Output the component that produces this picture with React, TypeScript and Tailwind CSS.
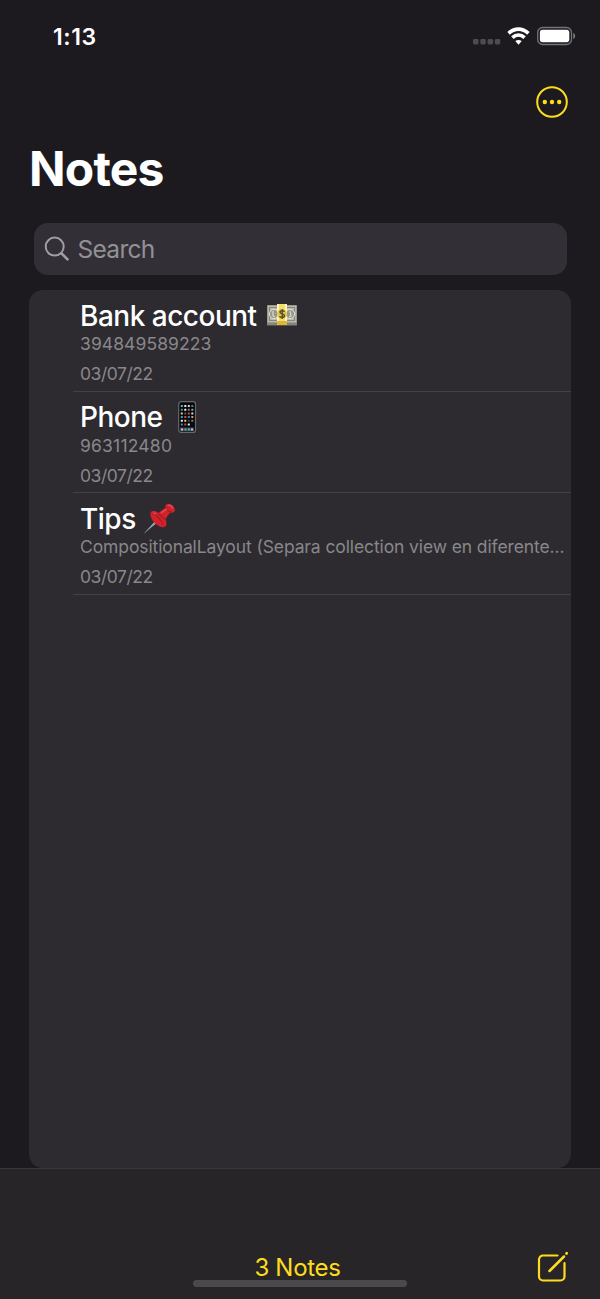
import type { ReactNode } from "react";

function Money() {
  return (
    <svg width="32" height="24" viewBox="0 0 32 24" role="img" aria-label="Money">
      <path d="M1 2h30v20H1z" fill="#77766f" />
      <path d="M1.5 2.5h29v17h-29z" fill="#bdbbad" />
      <path d="M3.5 4.5h25v13h-25z" fill="none" stroke="#85847d" strokeWidth="1.2" />
      <path d="M1 20h30M1 22h30" stroke="#a5a293" strokeWidth=".7" />
      <circle cx="8" cy="11" r="4.6" fill="#99988f" stroke="#e4e1cd" />
      <circle cx="24" cy="11" r="4.6" fill="#99988f" stroke="#e4e1cd" />
      <path d="M7 8v5l2 1M24 8l1 5-2 1" fill="none" stroke="#dedbc8" strokeWidth="1.2" />
      <path d="M11 1h10v21H11z" fill="#f4dc68" />
      <path d="M11 1h2v21h-2zM19 1h2v21h-2z" fill="#fff4be" />
      <path d="M11 18h10v4H11z" fill="#d8b739" />
      <circle cx="16" cy="11" r="5" fill="#e4c546" />
      <path d="M18.5 8.8c-.5-1.2-4.5-1.6-4.500.5 0 2 4.500 1.400 4.500 3.500 0 2.200-4.400 2-4.900.4M16.200 6v10" fill="none" stroke="#58502a" strokeWidth="1.400" />
    </svg>
  );
}

const appColors = [
  "#54b6df", "#eeeeee", "#d7d7d7", "#777777",
  "#349bc6", "#f1f1f1", "#8a7769", "#48b5e8",
  "#e8d57c", "#58585e", "#d9443f", "#dddddd",
  "#389fd4", "#c94e48", "#348bcb", "#f09a35",
  "#f4f4f4", "#e5cf66", "#3c4960", "#4a8fc0",
  "#2f9bdc", "#d9453d", "#eeeeee", "#101013",
];

function Phone() {
  return (
    <svg width="20" height="34" viewBox="0 0 20 34" role="img" aria-label="Mobile phone">
      <rect x="1.7" y="1.7" width="16.8" height="30.8" rx="2.6" fill="#09090c" stroke="#68686c" strokeWidth="1.2" />
      {appColors.map((color, i) => (
        <rect key={i} x={3.8 + (i % 4) * 3.5} y={5 + Math.floor(i / 4) * 3.7} width="2" height="2" rx=".3" fill={color} />
      ))}
      <path d="M3 27.5h14v4H3z" fill="#434a4b" />
      <path d="M4 28.5h2v2H4zM14 28.5h2v2h-2z" fill="#c2cbc5" />
      <path d="M7.5 28.5h2v2h-2zM11 28.5h2v2h-2z" fill="#45acc2" />
    </svg>
  );
}

function Pin() {
  return (
    <svg width="34" height="34" viewBox="0 0 34 34" role="img" aria-label="Pushpin">
      <path d="m1.500 32 12.500-14 2 2z" fill="#b5c3cb" />
      <path d="m1.500 32 13.500-13" stroke="#6b8797" strokeWidth=".8" />
      <path d="M7.500 12c.6-2.500 4.500-2.500 8-.2l7-5.300c-.6-3 1.800-4.800 5-3.200 4 2 5.800 6.200 3.200 8-1 .7-2.600.5-3.700.2l-4.500 6.500c1.600 4 1.200 7.300-1.200 8-3 .8-6.700-1.200-9.400-3.800C9 19.200 6.800 15 7.500 12Z" fill="#d2222b" />
      <path d="M9 13c3-1 10 6 11 11M15.500 12.500l6.500 6M23 6c0 2 3 5 6 5" fill="none" stroke="#a91b24" strokeWidth="1.300" />
      <path d="m18 12 6-4M25 4.500c2-1 4 1 5 3M10 12l3 1" fill="none" stroke="#f04b50" strokeWidth="1.300" />
    </svg>
  );
}

type Note = { title: string; body: string; icon: ReactNode; titleClass: string; bodyClass: string };

const notes: Note[] = [
  { title: "Bank account", body: "394849589223", icon: <Money />, titleClass: "w-[186px]", bodyClass: "tracking-[0.08px]" },
  { title: "Phone", body: "963112480", icon: <Phone />, titleClass: "w-[97px]", bodyClass: "tracking-[0.2px]" },
  { title: "Tips", body: "CompositionalLayout (Separa collection view en diferente...", icon: <Pin />, titleClass: "w-[63px]", bodyClass: "tracking-[-0.11px]" },
];

export default function App() {
  return (
    <div className="flex h-[1299px] w-[600px] flex-col overflow-hidden bg-[#1c1a1f] font-['Inter',sans-serif] text-white">
      <header className="flex h-[72px] items-center justify-between pr-6 pl-[53px]">
        <span className="pt-[1px] text-[23px] leading-7 font-semibold tracking-[0.6px]">1:13</span>
        <div className="flex items-center">
          <svg width="28" height="8" viewBox="0 0 28 8" className="mt-[11px] fill-[#4c4b4f]">
            <rect x="0" y="1" width="5.500" height="5.500" rx="1.4" />
            <rect x="7.300" y="1" width="5.500" height="5.500" rx="1.4" />
            <rect x="14.600" y="1" width="5.500" height="5.500" rx="1.4" />
            <rect x="21.800" y="1" width="5.500" height="5.500" rx="1.4" />
          </svg>
          <svg width="24" height="18" viewBox="0 0 24 18" className="ml-[6px]" fill="none" stroke="white" strokeWidth="3.700">
            <path d="M1.600 6.300C7.600.6 15.400.6 21.400 6.300" />
            <path d="M5.400 10.600c3.600-3.300 8.600-3.300 12.200 0" />
            <path d="M8.300 14.100c1.800-1.600 4.600-1.600 6.400 0L11.500 17.700Z" fill="white" stroke="none" />
          </svg>
          <svg width="39" height="20" viewBox="0 0 39 20" className="ml-[6px]">
            <rect x=".7" y="1.500" width="33.800" height="17" rx="5" fill="none" stroke="#737276" strokeWidth="1.300" />
            <rect x="2.900" y="3.800" width="29.400" height="12.400" rx="2.600" fill="white" />
            <path d="M36.300 7c2.400 1 2.400 5 0 6Z" fill="#817f83" />
          </svg>
        </div>
      </header>

      <div className="flex h-[60px] items-center justify-end pr-[31px]">
        <button aria-label="More options">
          <svg width="34" height="34" viewBox="0 0 34 34" className="block">
            <circle cx="17" cy="17" r="14.800" fill="none" stroke="#ffdc1b" strokeWidth="2" />
            <g fill="#ffdc1b"><circle cx="9.800" cy="17" r="2.200" /><circle cx="17" cy="17" r="2.200" /><circle cx="24.200" cy="17" r="2.200" /></g>
          </svg>
        </button>
      </div>

      <h1 className="h-[91px] pt-[7px] pl-[29px] text-[48px] leading-[60px] font-bold tracking-[-0.8px]">Notes</h1>

      <div className="mr-[33px] ml-[33.5px] flex h-[52px] shrink-0 items-center rounded-[14px] bg-[#323036] pl-[10px] text-[#929095]">
        <svg width="28" height="28" viewBox="0 0 28 28" fill="none" stroke="#a09ea2" strokeLinecap="round">
          <circle cx="10.700" cy="11.600" r="9" strokeWidth="2" />
          <path d="m17.500 18.400 6 6" strokeWidth="2.700" />
        </svg>
        <span className="ml-[6px] text-[24.5px] leading-8 tracking-[-0.7px]">Search</span>
      </div>

      <main className="mx-[29px] mt-[15px] h-[878px] shrink-0 overflow-hidden rounded-[14px] bg-[#2d2b2f]">
        {notes.map((note) => (
          <article key={note.title} className="ml-[44px] flex h-[101.500px] flex-col border-b border-[#434145] pl-[7px]">
            <div className="mt-[8px] flex h-[34px] items-center">
              <h2 className={`shrink-0 pt-[1px] text-[28px] leading-[34px] font-medium tracking-[-0.5px] whitespace-nowrap ${note.titleClass}`}>{note.title}</h2>
              {note.icon}
            </div>
            <p className={`text-[17.500px] leading-6 whitespace-nowrap text-[#89878b] ${note.bodyClass}`}>{note.body}</p>
            <time className="mt-[6px] text-[17.500px] leading-6 tracking-[-0.45px] text-[#89878b]">03/07/22</time>
          </article>
        ))}
      </main>

      <footer className="flex h-[131px] shrink-0 flex-col border-t border-[#39373a] bg-[#272528]">
        <div className="mt-[80px] grid h-[31px] grid-cols-[1fr_auto_1fr] items-center">
          <span />
          <span className="mt-[2px] mr-[5px] text-[24px] leading-[31px] tracking-[-0.3px] text-[#ffdc1b]">3 Notes</span>
          <button aria-label="New note" className="mr-[31px] justify-self-end pt-[1px]">
            <svg width="34" height="34" viewBox="0 0 34 34" className="block" fill="none" stroke="#ffdc1b" strokeWidth="2.200" strokeLinecap="round">
              <path d="M22.500 5.500H8a4 4 0 0 0-4 4v17a4 4 0 0 0 4 4h17.500a4 4 0 0 0 4-4V13" />
              <path d="M14.500 21 29 6.500" strokeWidth="2.500" />
              <path d="m31.500 3.500.2-.2" strokeWidth="2.800" />
            </svg>
          </button>
        </div>
        <div className="mx-auto h-[7px] w-[214px] rounded-full bg-[#4b494c]" />
      </footer>
    </div>
  );
}
